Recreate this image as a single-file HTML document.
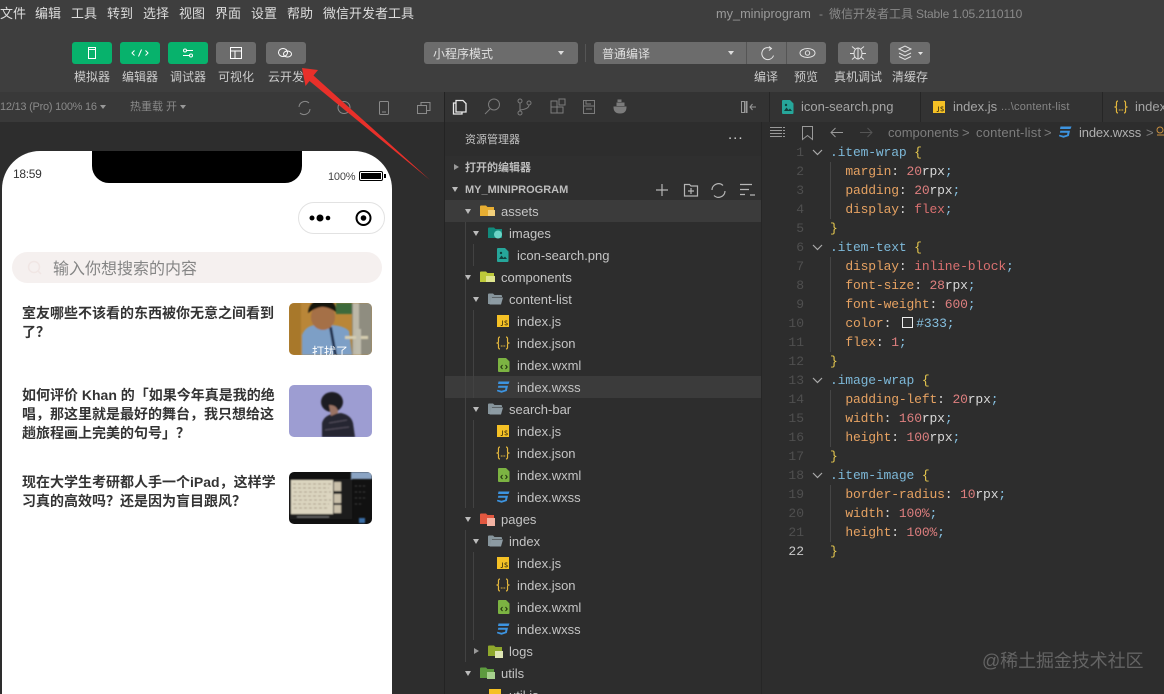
<!DOCTYPE html>
<html lang="zh">
<head>
<meta charset="utf-8">
<title>my_miniprogram</title>
<style>
*{box-sizing:border-box;margin:0;padding:0}
html,body{width:1164px;height:694px;overflow:hidden;background:#2d2d2d}
body{position:relative;font-family:"Liberation Sans","Noto Sans CJK SC",sans-serif;color:#ccc}
.a,.t,.m,.l,.b,.g,.tri,.trr,svg.i{position:absolute}
.m{top:5px;font-size:13px;line-height:18px;color:#ddd;white-space:nowrap}
.b{top:42px;height:22px;border-radius:3px;background:#6c6c6c}
.gn{background:#07b26c}
.l{top:69px;font-size:12px;line-height:16px;color:#ccc;white-space:nowrap;text-align:center}
.t{font-size:13px;line-height:22px;height:22px;color:#c4c4c4;white-space:nowrap;margin-top:1px}
.g{width:1px;background:#424242}
.tri{width:0;height:0;border-left:3.5px solid transparent;border-right:3.5px solid transparent;border-top:5px solid #bbb}
.trr{width:0;height:0;border-top:3.5px solid transparent;border-bottom:3.5px solid transparent;border-left:5px solid #999}
pre{position:absolute;font-family:"Liberation Mono","DejaVu Sans Mono",monospace;font-size:13px;line-height:19px;letter-spacing:-.15px}
.s{color:#7db8d8}.y{color:#e6c84f}.p{color:#e6a262}.n{color:#de7f7f}.v{color:#d97070}.u{color:#d8d8d8}.c{color:#85bfdf}
.q{font-size:14px;font-weight:700;line-height:19px;color:#333;position:absolute;left:22px;white-space:nowrap}
.img{position:absolute;left:289px;width:83px;height:52px;border-radius:5px;overflow:hidden}
.bc{position:absolute;top:124px;font-size:13px;line-height:17px;color:#7d7d7d;white-space:nowrap}
</style>
</head>
<body>
<svg width="0" height="0" style="position:absolute">
<symbol id="js" viewBox="0 0 12 12"><rect width="12" height="12" fill="#f5c125"/><path d="M5.500 5.500v4.200c0 .8-.9 1-1.800.6M10.300 6.300c-1-.7-2.500-.5-2.500.5 0 1.300 2.600.9 2.600 2.200 0 1.100-1.700 1.200-2.800.5" fill="none" stroke="#4a3c10" stroke-width=".9"/></symbol>
<symbol id="xm" viewBox="0 0 12 14"><path d="M1 0h7l3.500 3.500V13a1 1 0 0 1-1 1H1a1 1 0 0 1-1-1V1a1 1 0 0 1 1-1z" fill="#7cb342"/><path d="M4.500 7 2.800 9l1.700 2M7.500 7l1.700 2-1.700 2" fill="none" stroke="#20300f" stroke-width="1"/></symbol>
<symbol id="css" viewBox="0 0 14 12"><path d="M2.500.5H13.500L12.500 3H2zM2.300 4.800H12L10.800 10 5.500 11.700 1 10.300l.3-1.500 4.200 1 3.600-1 .4-2H1.900z" fill="#3d94e0"/></symbol>
<symbol id="fo" viewBox="0 0 15 12"><path d="M0 1.500A1 1 0 0 1 1 .5h4l1.500 1.500H13a1 1 0 0 1 1 1V4H4L2 11H0z" fill="#87959c"/><path d="M3.500 4.500H15l-2 7H1.500z" fill="#8d9ba3"/></symbol>
<symbol id="png" viewBox="0 0 12 14"><path d="M1 0h7l3.500 3.500V13a1 1 0 0 1-1 1H1a1 1 0 0 1-1-1V1a1 1 0 0 1 1-1z" fill="#26a69a"/><path d="M2 11l2.500-3.500L6.500 10l1.500-1.500L10 11z" fill="#10403c"/><circle cx="4" cy="5" r="1.200" fill="#10403c"/></symbol>
<symbol id="jn" viewBox="0 0 16 14"><path d="M5 1C3 1 3.500 3 3.500 5S3 7 1.500 7C3 7 3.500 7 3.500 9S3 13 5 13M11 1c2 0 1.500 2 1.500 4s.5 2 2 2c-1.500 0-2 0-2 2s.5 4-1.500 4" fill="none" stroke="#e6b93d" stroke-width="1.200"/><circle cx="6.300" cy="10" r=".6" fill="#e6b93d"/><circle cx="8" cy="10" r=".6" fill="#e6b93d"/><circle cx="9.700" cy="10" r=".6" fill="#e6b93d"/></symbol>
</svg>

<!-- top bar -->
<div class="a" style="left:0;top:0;width:1164px;height:92px;background:#3e3e3e"></div>
<div class="m" style="left:0">文件</div><div class="m" style="left:35px">编辑</div><div class="m" style="left:71px">工具</div><div class="m" style="left:107px">转到</div><div class="m" style="left:143px">选择</div><div class="m" style="left:179px">视图</div><div class="m" style="left:215px">界面</div><div class="m" style="left:251px">设置</div><div class="m" style="left:287px">帮助</div><div class="m" style="left:323px">微信开发者工具</div>
<div class="m" style="left:716px;color:#9a9a9a;font-size:13px;transform-origin:0 50%;transform:scaleX(.98)">my_miniprogram</div>
<div class="m" style="left:819px;color:#8a8a8a;font-size:12px">-</div>
<div class="m" style="left:829px;color:#8a8a8a;font-size:12px">微信开发者工具</div>
<div class="m" style="left:916px;color:#8a8a8a;font-size:12px;letter-spacing:-.15px">Stable 1.05.2110110</div>

<div class="b gn" style="left:72px;width:40px"></div>
<div class="b gn" style="left:120px;width:40px"></div>
<div class="b gn" style="left:168px;width:40px"></div>
<div class="b" style="left:216px;width:40px"></div>
<div class="b" style="left:266px;width:40px"></div>
<svg class="i" style="left:72px;top:42px" width="240" height="22" fill="none" stroke="#fff" stroke-width="1">
<rect x="16.500" y="5.500" width="7" height="11"/><path d="M16.500 7.500h7"/>
<path d="M62.500 8.500 60 11l2.500 2.500M73.500 8.500 76 11l-2.500 2.500M69.500 7.500l-3 7"/>
<path d="M111 8.500h10M111 13.500h10"/><circle cx="113" cy="8.500" r="1.500" fill="#07b26c"/><circle cx="119" cy="13.500" r="1.500" fill="#07b26c"/>
<rect x="158.500" y="5.500" width="11" height="11"/><path d="M158.500 9h11M163 9v7.500"/>
<ellipse cx="211" cy="10.500" rx="4.500" ry="4"/><ellipse cx="215.500" cy="12" rx="4" ry="3"/>
</svg>
<div class="l" style="left:72px;width:40px">模拟器</div><div class="l" style="left:120px;width:40px">编辑器</div><div class="l" style="left:168px;width:40px">调试器</div><div class="l" style="left:216px;width:40px">可视化</div><div class="l" style="left:266px;width:40px">云开发</div>

<div class="b" style="left:424px;width:154px"></div>
<div class="a" style="left:433px;top:46px;font-size:12px;line-height:16px;color:#e0e0e0">小程序模式</div>
<div class="tri" style="left:558px;top:51px;border-left-width:3px;border-right-width:3px;border-top:4px solid #ddd"></div>
<div class="a" style="left:585px;top:44px;width:1px;height:18px;background:#555"></div>
<div class="b" style="left:594px;width:232px"></div>
<div class="a" style="left:602px;top:46px;font-size:12px;line-height:16px;color:#e0e0e0">普通编译</div>
<div class="tri" style="left:728px;top:51px;border-left-width:3px;border-right-width:3px;border-top:4px solid #ddd"></div>
<div class="a" style="left:746px;top:42px;width:1px;height:22px;background:#555"></div>
<div class="a" style="left:786px;top:42px;width:1px;height:22px;background:#555"></div>
<div class="b" style="left:838px;width:40px"></div>
<div class="b" style="left:890px;width:40px"></div>
<svg class="i" style="left:750px;top:42px" width="185" height="22" fill="none" stroke="#e4e4e4" stroke-width="1">
<path d="M21 6.500a6 6 0 1 0 2.500 7M19 4.500l2.500 2-2.500 2"/>
<ellipse cx="57.500" cy="11" rx="7.500" ry="4.500"/><circle cx="57.500" cy="11" r="2.200"/>
<ellipse cx="108" cy="11.500" rx="4" ry="5.500"/><path d="M105 7l-3-2.500M111 7l3-2.500M104 11.500h-4M112 11.500h4M105 15l-3 2.500M111 15l3 2.500M108 6v11"/>
<path d="M149 7l6-3 6 3-6 3zM149 11l6 3 6-3M149 14.500l6 3 6-3"/><path d="M168 10h5l-2.500 3z" fill="#e4e4e4" stroke="none"/>
</svg>
<div class="l" style="left:754px">编译</div><div class="l" style="left:794px">预览</div><div class="l" style="left:834px">真机调试</div><div class="l" style="left:892px">清缓存</div>

<!-- sim toolbar -->
<div class="a" style="left:0;top:92px;width:444px;height:30px;background:#393939"></div>
<div class="a" style="left:0;top:99px;font-size:11px;line-height:16px;color:#8a8a8a;white-space:nowrap;letter-spacing:-.25px">12/13 (Pro) 100% 16</div>
<div class="tri" style="left:100px;top:105px;border-left-width:3px;border-right-width:3px;border-top:4px solid #999"></div>
<div class="a" style="left:130px;top:99px;font-size:11px;line-height:16px;color:#8a8a8a;white-space:nowrap">热重载 开</div>
<div class="tri" style="left:180px;top:105px;border-left-width:3px;border-right-width:3px;border-top:4px solid #999"></div>
<svg class="i" style="left:295px;top:96px" width="140" height="24" fill="none" stroke="#8a8a8a" stroke-width="1">
<path d="M4 11a6 6 0 0 1 10-4M15 13a6 6 0 0 1-10 4"/>
<circle cx="49" cy="11.500" r="6"/><path d="M49 8.500v3l2 2"/>
<rect x="84.500" y="5.500" width="9" height="13" rx="1"/><path d="M87 16h4"/>
<rect x="122.500" y="9.500" width="9" height="8"/><path d="M126 9V6.500h9v8h-3"/>
</svg>
<div class="a" style="left:444px;top:92px;width:1px;height:602px;background:#232323"></div>

<!-- phone -->
<div class="a" style="left:2px;top:151px;width:390px;height:560px;background:#fff;border-radius:38px 38px 0 0"></div>
<div class="a" style="left:92px;top:151px;width:210px;height:32px;background:#000;border-radius:0 0 17px 17px"></div>
<div class="a" style="left:13px;top:167px;font-size:12px;line-height:15px;color:#333;letter-spacing:-.3px">18:59</div>
<div class="a" style="left:328px;top:170px;font-size:11px;line-height:14px;color:#444;letter-spacing:-.2px">100%</div>
<div class="a" style="left:359px;top:171px;width:24px;height:10px;border:1px solid #000;border-radius:2px;padding:1px"><div style="width:100%;height:100%;background:#000"></div></div>
<div class="a" style="left:384px;top:174px;width:1.500px;height:4px;background:#000"></div>
<div class="a" style="left:298px;top:202px;width:87px;height:32px;border:1px solid #e2e2e2;border-radius:16px;background:#fff"></div>
<svg class="i" style="left:305px;top:205px" width="75" height="26"><circle cx="7" cy="13" r="2.500"/><circle cx="15" cy="13" r="3.500"/><circle cx="23" cy="13" r="2.300"/><circle cx="58.500" cy="13" r="7" fill="none" stroke="#000" stroke-width="2"/><circle cx="58.500" cy="13" r="2.800"/></svg>
<div class="a" style="left:12px;top:252px;width:370px;height:31px;background:#f5f0ef;border-radius:15.500px"></div>
<svg class="i" style="left:26px;top:259px" width="18" height="18" fill="none" stroke="#f0e6e4" stroke-width="1.500"><circle cx="8" cy="8" r="5.500"/><path d="M12 12l3 3"/></svg>
<div class="a" style="left:53px;top:259px;font-size:16px;line-height:22px;color:#858585;white-space:nowrap">输入你想搜索的内容</div>

<div class="q" style="top:304px">室友哪些不该看的东西被你无意之间看到<br>了&#65311;</div>
<div class="q" style="top:386px">如何评价 Khan 的「如果今年真是我的绝<br>唱&#65292;那这里就是最好的舞台&#65292;我只想给这<br>趟旅程画上完美的句号」&#65311;</div>
<div class="q" style="top:473px">现在大学生考研都人手一个iPad&#65292;这样学<br>习真的高效吗&#65311;还是因为盲目跟风&#65311;</div>

<div class="img" style="top:303px">
<svg width="83" height="52" viewBox="0 0 83 52"><defs><filter id="bl"><feGaussianBlur stdDeviation=".8"/></filter></defs>
<rect width="83" height="52" fill="#b98638"/>
<g filter="url(#bl)"><rect x="0" width="12" height="52" fill="#a8782c"/><rect x="47" width="17" height="11" fill="#3d6a3a"/><rect x="63" width="20" height="52" fill="#8f8d80"/><rect x="64" width="6" height="52" fill="#bdb8a8"/>
<path d="M13 52V32q4-10 15-10h12q14 0 20 6l3 24z" fill="#7d9fc6"/><path d="M43 24l5 28h-3l-5-28z" fill="#24324f"/>
<ellipse cx="34" cy="14" rx="12" ry="13" fill="#a56f46"/><path d="M19 10Q20-3 34-3t13 12Q38 3 32 4t-13 6z" fill="#17120e"/>
<rect x="56" y="33" width="23" height="3" fill="#d5cdb0"/><rect x="67" y="26" width="5" height="26" fill="#c0bdad"/></g>
<text x="41" y="53" font-size="12" fill="#fff" text-anchor="middle" font-family="Noto Sans CJK SC,sans-serif">打扰了</text></svg>
</div>
<div class="img" style="top:385px">
<svg width="83" height="52" viewBox="0 0 83 52"><rect width="83" height="52" fill="#9d9dd2"/><g filter="url(#bl)"><path d="M33 52V38q2-7 10-9l9-1q10 2 12 10l2 14z" fill="#262530"/><ellipse cx="43" cy="17" rx="11" ry="10" fill="#1e1a20"/><path d="M40 20q9 0 9 8l-7 3z" fill="#9a7264"/><path d="M40 38l18-3M36 45l24-3" stroke="#55505f" stroke-width="1"/></g></svg>
</div>
<div class="img" style="top:472px">
<svg width="83" height="52" viewBox="0 0 83 52"><rect width="83" height="52" fill="#111"/><g filter="url(#bl)" stroke-width="1"><rect x="62" width="21" height="7" fill="#8ba4c4"/><rect x="1" y="7" width="62" height="40" fill="#1b1b1b"/><rect x="2" y="8" width="42" height="34" fill="#dcd5c0"/><g fill="none" stroke="#8f8270" stroke-dasharray="3 2" stroke-opacity=".7"><path d="M4 12h38M4 16h36M5 20h37M4 24h34M5 28h37M4 32h36M5 36h34"/></g><rect x="45" y="10" width="7" height="9" fill="#c9c0aa"/><rect x="45" y="22" width="7" height="9" fill="#c9c0aa"/><rect x="45" y="33" width="7" height="8" fill="#c9c0aa"/><path d="M66 14h12M66 20h12M66 26h12M66 32h8" stroke="#444" stroke-dasharray="2 2"/><path d="M8 45h32" stroke="#777"/><rect x="70" y="46" width="6" height="5" fill="#3b6ea8"/></g></svg>
</div>

<!-- arrow -->
<svg class="i" style="left:0;top:0" width="450" height="200"><path d="M302 68 318 70 313.500 75.500 430 180 309.500 81 305.500 86z" fill="#e8302a"/></svg>

<!-- explorer -->
<div class="a" style="left:445px;top:92px;width:719px;height:30px;background:#333"></div>
<div class="a" style="left:445px;top:122px;width:324px;height:572px;background:#2d2d2d"></div>
<svg class="i" style="left:450px;top:95px" width="310" height="24" fill="none" stroke="#7c7c7c" stroke-width="1">
<path d="M6 5.500h7l3 3V17H6zM6 8H3.500v11H12v-2" stroke="#e8e8e8" stroke-width="1.300"/>
<circle cx="44" cy="9.500" r="5.500"/><path d="M40 14l-5 5"/>
<circle cx="70" cy="6" r="2"/><circle cx="70" cy="18" r="2"/><circle cx="79" cy="8" r="2"/><path d="M70 8v8M79 10q0 4-9 5"/>
<rect x="101" y="12" width="6" height="6"/><rect x="107" y="12" width="6" height="6"/><rect x="101" y="6" width="6" height="6"/><rect x="109" y="4" width="6" height="6"/>
<rect x="133.500" y="5.500" width="11" height="13"/><path d="M133.500 11h11M136 5.500V9h5M136 14h6"/>
<path d="M164 12h12q0 6-6 6t-6-6z" fill="#7c7c7c"/><path d="M167 11V8h3v3M171 11V8h3v3M168 7V5h3v2" fill="#7c7c7c"/>
<rect x="291.500" y="6.500" width="3" height="11" stroke="#999"/><rect x="296" y="6.500" width="1" height="11" stroke="#999"/><path d="M306 12h-6M302.500 9 300 12l2.500 3" stroke="#999"/>
</svg>
<div class="a" style="left:465px;top:132px;font-size:11px;line-height:16px;color:#c4c4c4">资源管理器</div>
<div class="a" style="left:728px;top:126px;font-size:15px;line-height:18px;color:#ccc;letter-spacing:1px">...</div>
<div class="a" style="left:445px;top:156px;width:316px;height:44px;background:#2f2f2f"></div>
<div class="trr" style="left:454px;top:163.500px"></div>
<div class="a" style="left:465px;top:160px;font-size:11px;line-height:16px;font-weight:700;color:#bdbdbd">打开的编辑器</div>
<div class="tri" style="left:452px;top:187px"></div>
<div class="a" style="left:465px;top:182px;font-size:11px;line-height:16px;font-weight:700;color:#bdbdbd">MY_MINIPROGRAM</div>
<svg class="i" style="left:650px;top:179px" width="110" height="22" fill="none" stroke="#b5b5b5" stroke-width="1.200"><path d="M12 5v12M6 11h12"/><path d="M34.500 5.500h5l1.500 1.500h6.500v10h-13zM41 9v6M38 12h6"/><path d="M62 11a6.500 6.500 0 0 1 11-4.500M75 12a6.500 6.500 0 0 1-11 4.500"/><path d="M90 5.500h12M90 10.500h9M90 15.500h5M100 16h5"/></svg>

<div class="a" style="left:445px;top:200px;width:316px;height:22px;background:#3b3b3b"></div>
<div class="a" style="left:445px;top:376px;width:316px;height:22px;background:#3b3b3b"></div>
<div class="g" style="left:465px;top:222px;height:286px"></div>
<div class="g" style="left:473px;top:244px;height:22px"></div>
<div class="g" style="left:473px;top:310px;height:88px"></div>
<div class="g" style="left:473px;top:420px;height:88px"></div>
<div class="g" style="left:465px;top:530px;height:132px"></div>
<div class="g" style="left:473px;top:552px;height:88px"></div>

<div class="tri" style="left:464.500px;top:209px"></div><svg class="i" style="left:480px;top:205px" width="15" height="12"><path d="M0 1.500A1 1 0 0 1 1 .5h5l1.500 1.500H14v9H0z" fill="#e7ae32"/><rect x="8" y="5" width="7" height="6" fill="#f2cf7a"/></svg><div class="t" style="left:501px;top:200px">assets</div>
<div class="tri" style="left:472.500px;top:231px"></div><svg class="i" style="left:488px;top:227px" width="15" height="12"><path d="M0 1.500A1 1 0 0 1 1 .5h5l1.500 1.500H14v9H0z" fill="#128a7c"/><circle cx="10" cy="7.500" r="4" fill="#6cd5c7"/></svg><div class="t" style="left:509px;top:222px">images</div>
<svg class="i" style="left:497px;top:248px" width="12" height="14"><use href="#png"/></svg><div class="t" style="left:517px;top:244px">icon-search.png</div>
<div class="tri" style="left:464.500px;top:275px"></div><svg class="i" style="left:480px;top:271px" width="15" height="12"><path d="M0 1.500A1 1 0 0 1 1 .5h5l1.500 1.500H14v9H0z" fill="#bdc93a"/><rect x="6" y="5" width="9" height="6" fill="#dfe58e"/></svg><div class="t" style="left:501px;top:266px">components</div>
<div class="tri" style="left:472.500px;top:297px"></div><svg class="i" style="left:488px;top:293px" width="15" height="12"><use href="#fo"/></svg><div class="t" style="left:509px;top:288px">content-list</div>
<svg class="i" style="left:497px;top:315px" width="12" height="12"><use href="#js"/></svg><div class="t" style="left:517px;top:310px">index.js</div>
<svg class="i" style="left:495px;top:336px" width="16" height="14"><use href="#jn"/></svg><div class="t" style="left:517px;top:332px">index.json</div>
<svg class="i" style="left:498px;top:358px" width="12" height="14"><use href="#xm"/></svg><div class="t" style="left:517px;top:354px">index.wxml</div>
<svg class="i" style="left:496px;top:381px" width="14" height="12"><use href="#css"/></svg><div class="t" style="left:517px;top:376px">index.wxss</div>
<div class="tri" style="left:472.500px;top:407px"></div><svg class="i" style="left:488px;top:403px" width="15" height="12"><use href="#fo"/></svg><div class="t" style="left:509px;top:398px">search-bar</div>
<svg class="i" style="left:497px;top:425px" width="12" height="12"><use href="#js"/></svg><div class="t" style="left:517px;top:420px">index.js</div>
<svg class="i" style="left:495px;top:446px" width="16" height="14"><use href="#jn"/></svg><div class="t" style="left:517px;top:442px">index.json</div>
<svg class="i" style="left:498px;top:468px" width="12" height="14"><use href="#xm"/></svg><div class="t" style="left:517px;top:464px">index.wxml</div>
<svg class="i" style="left:496px;top:491px" width="14" height="12"><use href="#css"/></svg><div class="t" style="left:517px;top:486px">index.wxss</div>
<div class="tri" style="left:464.500px;top:517px"></div><svg class="i" style="left:480px;top:513px" width="15" height="13"><path d="M0 1.500A1 1 0 0 1 1 .5h5l1.500 1.500H14v9H0z" fill="#e2573f"/><rect x="7" y="5" width="8" height="8" fill="#f3b3a3"/></svg><div class="t" style="left:501px;top:508px">pages</div>
<div class="tri" style="left:472.500px;top:539px"></div><svg class="i" style="left:488px;top:535px" width="15" height="12"><use href="#fo"/></svg><div class="t" style="left:509px;top:530px">index</div>
<svg class="i" style="left:497px;top:557px" width="12" height="12"><use href="#js"/></svg><div class="t" style="left:517px;top:552px">index.js</div>
<svg class="i" style="left:495px;top:578px" width="16" height="14"><use href="#jn"/></svg><div class="t" style="left:517px;top:574px">index.json</div>
<svg class="i" style="left:498px;top:600px" width="12" height="14"><use href="#xm"/></svg><div class="t" style="left:517px;top:596px">index.wxml</div>
<svg class="i" style="left:496px;top:623px" width="14" height="12"><use href="#css"/></svg><div class="t" style="left:517px;top:618px">index.wxss</div>
<div class="trr" style="left:474px;top:647.500px"></div><svg class="i" style="left:488px;top:645px" width="15" height="13"><path d="M0 1.500A1 1 0 0 1 1 .5h5l1.500 1.500H14v9H0z" fill="#8fa82c"/><rect x="7" y="6" width="8" height="7" fill="#dfe6b5"/></svg><div class="t" style="left:509px;top:640px">logs</div>
<div class="tri" style="left:464.500px;top:671px"></div><svg class="i" style="left:480px;top:667px" width="15" height="13"><path d="M0 1.500A1 1 0 0 1 1 .5h5l1.500 1.500H14v9H0z" fill="#5d9b3e"/><rect x="7" y="5" width="8" height="7" fill="#a7d08e"/></svg><div class="t" style="left:501px;top:662px">utils</div>
<svg class="i" style="left:489px;top:689px" width="12" height="12"><use href="#js"/></svg><div class="t" style="left:509px;top:684px">util.js</div>

<!-- tabs -->
<div class="a" style="left:761px;top:122px;width:1px;height:572px;background:#262626"></div>
<div class="a" style="left:769px;top:92px;width:1px;height:30px;background:#262626"></div>
<div class="a" style="left:920px;top:92px;width:1px;height:30px;background:#262626"></div>
<div class="a" style="left:1102px;top:92px;width:1px;height:30px;background:#262626"></div>
<svg class="i" style="left:782px;top:100px" width="12" height="14"><use href="#png"/></svg>
<div class="t" style="left:801px;top:95px;color:#a5a5a5">icon-search.png</div>
<svg class="i" style="left:933px;top:101px" width="12" height="12"><use href="#js"/></svg>
<div class="t" style="left:953px;top:95px;color:#a5a5a5">index.js</div>
<div class="t" style="left:1001px;top:95px;color:#868686;font-size:11px;letter-spacing:.2px">...\content-list</div>
<svg class="i" style="left:1113px;top:100px" width="16" height="14"><use href="#jn"/></svg>
<div class="t" style="left:1135px;top:95px;color:#a5a5a5">index</div>

<!-- breadcrumb -->
<svg class="i" style="left:768px;top:122px" width="110" height="22" fill="none" stroke="#999" stroke-width="1"><path d="M2 5.500h15M2 8.500h15M2 11.500h15M2 14.500h15" stroke-dasharray="12 1"/><path d="M34.500 4.500h10v13l-5-4-5 4z"/><path d="M75 10.500H63M67.500 6 63 10.500l4.500 4.500"/><path d="M104 10.500H92M99.500 6l4.500 4.500-4.500 4.500" stroke="#555"/></svg>
<div class="bc" style="left:888px">components</div>
<div class="bc" style="left:962px">&gt;</div>
<div class="bc" style="left:976px;letter-spacing:.2px">content-list</div>
<div class="bc" style="left:1044px">&gt;</div>
<svg class="i" style="left:1058px;top:126px" width="14" height="12"><use href="#css"/></svg>
<div class="bc" style="left:1079px;color:#b0b0b0;letter-spacing:-.15px">index.wxss</div>
<div class="bc" style="left:1146px">&gt;</div>
<svg class="i" style="left:1156px;top:126px" width="8" height="12" fill="none" stroke="#c98f3f"><circle cx="4" cy="4" r="3"/><path d="M1 9h7"/></svg>

<!-- code -->
<pre style="left:770px;top:143px;width:34px;text-align:right;color:#4f4f4f;letter-spacing:0">1
2
3
4
5
6
7
8
9
10
11
12
13
14
15
16
17
18
19
20
21
<span style="color:#c8c8c8">22</span></pre>
<svg class="i" style="left:810px;top:143px" width="30" height="420" fill="none" stroke="#aaa" stroke-width="1.200"><path d="M3 7l4.500 4.500L12 7M3 102l4.500 4.500L12 102M3 235l4.500 4.500L12 235M3 330l4.500 4.500L12 330"/><path d="M20.500 19v57M20.500 114v95M20.500 247v57M20.500 342v57" stroke="#454545" stroke-width="1"/></svg>
<pre style="left:830px;top:143px"><span class="s">.item-wrap</span> <span class="y">{</span>
  <span class="p">margin</span><span class="u">:</span> <span class="n">20</span><span class="u">rpx</span><span class="c">;</span>
  <span class="p">padding</span><span class="u">:</span> <span class="n">20</span><span class="u">rpx</span><span class="c">;</span>
  <span class="p">display</span><span class="u">:</span> <span class="v">flex</span><span class="c">;</span>
<span class="y">}</span>
<span class="s">.item-text</span> <span class="y">{</span>
  <span class="p">display</span><span class="u">:</span> <span class="v">inline-block</span><span class="c">;</span>
  <span class="p">font-size</span><span class="u">:</span> <span class="n">28</span><span class="u">rpx</span><span class="c">;</span>
  <span class="p">font-weight</span><span class="u">:</span> <span class="n">600</span><span class="c">;</span>
  <span class="p">color</span><span class="u">:</span>   <span class="c" style="margin-left:2px">#333;</span>
  <span class="p">flex</span><span class="u">:</span> <span class="n">1</span><span class="c">;</span>
<span class="y">}</span>
<span class="s">.image-wrap</span> <span class="y">{</span>
  <span class="p">padding-left</span><span class="u">:</span> <span class="n">20</span><span class="u">rpx</span><span class="c">;</span>
  <span class="p">width</span><span class="u">:</span> <span class="n">160</span><span class="u">rpx</span><span class="c">;</span>
  <span class="p">height</span><span class="u">:</span> <span class="n">100</span><span class="u">rpx</span><span class="c">;</span>
<span class="y">}</span>
<span class="s">.item-image</span> <span class="y">{</span>
  <span class="p">border-radius</span><span class="u">:</span> <span class="n">10</span><span class="u">rpx</span><span class="c">;</span>
  <span class="p">width</span><span class="u">:</span> <span class="n">100%</span><span class="c">;</span>
  <span class="p">height</span><span class="u">:</span> <span class="n">100%</span><span class="c">;</span>
<span class="y">}</span></pre>
<div class="a" style="left:902px;top:317px;width:11px;height:11px;border:1px solid #eee;background:#333"></div>
<div class="a" style="left:982px;top:649px;font-size:18px;line-height:24px;color:#646464;white-space:nowrap;letter-spacing:-.1px">@稀土掘金技术社区</div>
</body>
</html>
